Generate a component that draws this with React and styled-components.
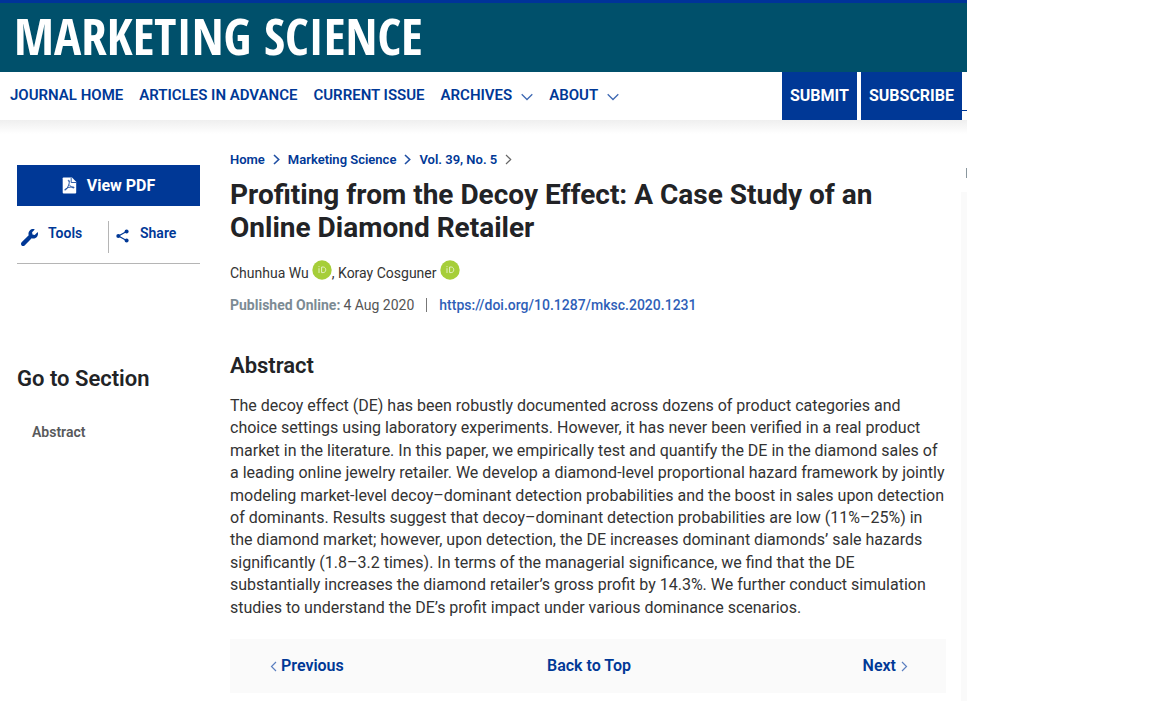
import React from "react";
import styled, { createGlobalStyle } from "styled-components";

const blue = "#003896";

const GlobalStyle = createGlobalStyle`
  *, *::before, *::after { box-sizing: border-box; }
  body {
    margin: 0;
    background: #fff;
    color: #333;
    font-family: Roboto, "Liberation Sans", sans-serif;
    font-size: 16px;
  }
  a { color: ${blue}; text-decoration: none; }
  button { font: inherit; cursor: pointer; }
`;

const Page = styled.div`
  display: flex;
  flex-direction: column;
  min-height: 100vh;
  margin-right: 185px;
`;

const Banner = styled.header`
  display: flex;
  align-items: center;
  height: 72px;
  padding: 0 14px 5px;
  border-top: 3px solid #003399;
  background: #00506b;
`;

const Logo = styled.a`
  color: #fff;
  font-family: "Open Sans Condensed", "Roboto Condensed", sans-serif;
  font-size: 51px;
  font-weight: 500;
  line-height: 60px;
  white-space: nowrap;
`;

const Nav = styled.nav`
  display: flex;
  justify-content: space-between;
  height: 48px;
  padding: 0 5px 0 10px;
  background: #fff;
`;

const NavShade = styled.div`
  height: 14px;
  background: linear-gradient(#efefef, #fff);
`;

const NavLinks = styled.div`
  display: flex;
  gap: 16px;
  height: 46px;
  align-items: center;
`;

const NavLink = styled.a`
  display: flex;
  align-items: center;
  gap: 9px;
  font-size: 15px;
  font-weight: 600;
  white-space: nowrap;
  svg { margin-top: 4px; }
`;

const NavActions = styled.div`
  display: flex;
  gap: 4px;
`;

const ActionLink = styled.a`
  padding: 0 8px;
  background: ${blue};
  color: #fff;
  font-weight: 700;
  line-height: 48px;
`;

const Clipped = styled.span`
  width: 5px;
  height: 1px;
  margin: 38px -5px 0 -4px;
  background: ${blue};
`;

const Body = styled.div`
  display: flex;
  flex: 1;
  padding-left: 17px;
`;

const Sidebar = styled.aside`
  flex: none;
  width: 183px;
  margin: 31px 30px 0 0;
`;

const PdfButton = styled.button`
  display: flex;
  align-items: center;
  justify-content: center;
  gap: 10px;
  width: 100%;
  height: 41px;
  padding: 0;
  border: 0;
  background: ${blue};
  color: #fff;
  font-weight: 700;
`;

const ToolRow = styled.div`
  display: grid;
  grid-template-columns: 91px 1fr;
  height: 58px;
  padding: 15px 0 10px;
  border-bottom: 1px solid #b5b5b5;
`;

const ToolButton = styled.button`
  display: flex;
  gap: ${(p) => p.$gap};
  padding: 4px 0 0 ${(p) => p.$inset};
  border: 0;
  border-left: ${(p) => (p.$divided ? "1px solid #b5b5b5" : "0")};
  background: none;
  color: ${blue};
  font-size: 14px;
  font-weight: 600;
  line-height: 16px;
  svg { margin-top: 4px; }
`;

const SectionHeading = styled.h2`
  margin: 0;
  color: #222326;
  font-size: 22px;
  font-weight: 600;
  line-height: 28px;
`;

const SectionNav = styled.nav`
  margin-top: 101px;
`;

const SectionLink = styled.a`
  display: block;
  margin: 31px 0 0 15px;
  color: #58595b;
  font-size: 14px;
  font-weight: 600;
  line-height: 16px;
`;

const Main = styled.main`
  flex: 1;
  min-width: 0;
  padding-top: 16px;
`;

const Breadcrumb = styled.nav`
  display: flex;
  align-items: center;
  gap: 8px;
  height: 18px;
  color: ${blue};
  font-size: 13px;
  font-weight: 600;
`;

const Title = styled.h1`
  margin: 10px 0 0;
  color: #222326;
  font-size: 28px;
  font-weight: 700;
  line-height: 33px;
`;

const Authors = styled.div`
  display: flex;
  align-items: center;
  height: 24px;
  margin-top: 17px;
  color: #333;
  font-size: 14px;
  svg { margin: -6px 0 0 3px; }
`;

const Published = styled.div`
  display: flex;
  align-items: center;
  height: 20px;
  margin-top: 10px;
  color: #555;
  font-size: 14px;
  strong { margin-right: 3px; color: #7c8b94; font-weight: 700; }
  a { color: #2f5fb8; font-weight: 500; }
`;

const Divider = styled.span`
  width: 1px;
  height: 14px;
  margin: 0 12px;
  background: #777;
`;

const Abstract = styled.section`
  margin-top: 37px;
  p {
    margin: 15px 0 0;
    color: #333;
    font-size: 16px;
    line-height: 1.4;
  }
`;

const Pager = styled.nav`
  display: grid;
  grid-template-columns: 1fr auto 1fr;
  align-items: center;
  height: 54px;
  margin-top: 20px;
  padding: 0 38px 0 40px;
  background: #fafafa;
  a { font-weight: 600; }
  a svg { margin: 0 4px -1px 0; }
  a:last-child { justify-self: end; }
  a:last-child svg { margin: 0 0 -1px 5px; }
`;

const Rail = styled.div`
  display: flex;
  flex: none;
  flex-direction: column;
  align-items: flex-end;
  width: 6px;
  margin-left: 15px;
  padding-top: 34px;
`;

const RailMark = styled.span`
  width: 1px;
  height: 10px;
  background: #8a979e;
`;

const RailTrack = styled.span`
  flex: 1;
  width: 6px;
  margin-top: 14px;
  background: #fafafa;
`;

const Chevron = ({ width, height, points, stroke = 1, color = "currentColor" }) => (
  <svg width={width} height={height} viewBox={`0 0 ${width} ${height}`} fill="none" stroke={color} strokeWidth={stroke} aria-hidden="true">
    <polyline points={points} />
  </svg>
);

const DownChevron = () => <Chevron width={12} height={8} points="0.7,1.2 6,6.5 11.3,1.2" stroke={1.3} color="#3f69b3" />;
const CrumbChevron = ({ color = "#1f4fa3", stroke = 1.6 }) => (
  <Chevron width={7} height={11} points="1,1 5.7,5.5 1,10" color={color} stroke={stroke} />
);

const PdfIcon = () => (
  <svg width="15" height="17" viewBox="0 0 15 17" aria-hidden="true">
    <path d="M1.5 .5H10L14.2 4.8V15.5Q14.2 16.5 13.2 16.5H1.7Q.7 16.5.7 15.5V1.3Q.7.5 1.5.5Z" fill="#fff" />
    <path d="M9.2 .8V5.5H14" fill="none" stroke={blue} strokeWidth=".8" />
    <path d="M6.8 4.7Q5.6 3.1 6.7 3.1Q8 3.1 7 7.1Q5.7 11.2 3.6 13Q2.2 13.7 3.2 12.1Q5.4 10.1 10.4 9.8Q12.7 10 12 11Q10.1 11.6 7.1 7.6" fill="none" stroke={blue} strokeWidth=".8" />
  </svg>
);

const WrenchIcon = () => (
  <svg width="17" height="17" viewBox="0 0 512 512" fill={blue} aria-hidden="true">
    <path d="M507.7 109.1c-2.2-9-13.5-12.1-20.1-5.5l-74.4 74.4-67.9-11.3L334 98.8l74.4-74.4c6.6-6.6 3.4-17.9-5.7-20.2-47.4-11.7-99.6.9-136.6 37.9-39.6 39.6-50.5 97.1-34.1 147.2L18.7 402.8c-25 25-25 65.5 0 90.5s65.5 25 90.5 0l213.2-213.2c50.1 16.7 107.5 5.7 147.4-34.2 37.1-37 49.7-89.3 37.9-136.8z" />
  </svg>
);

const ShareIcon = () => (
  <svg width="13" height="14" viewBox="0 0 13 14" fill={blue} aria-hidden="true">
    <path d="M10.5 2.5L2.5 7L10.5 11.5" fill="none" stroke={blue} strokeWidth="1.2" />
    <circle cx="10.6" cy="2.4" r="2" />
    <circle cx="2.3" cy="7" r="2" />
    <circle cx="10.6" cy="11.6" r="2" />
  </svg>
);

const OrcidIcon = () => (
  <svg width="20" height="20" viewBox="0 0 20 20" role="img" aria-label="ORCID">
    <circle cx="10" cy="10" r="9.7" fill="#a6ce39" />
    <g fill="none" stroke="#e4f1c3" strokeWidth="1">
      <path d="M7 8.2V13M9.6 7H11.2C14.6 7 14.6 12.6 11.2 12.6H9.6Z" />
    </g>
    <circle cx="7" cy="6.6" r=".6" fill="#e4f1c3" />
  </svg>
);

const navItems = [
  { label: "JOURNAL HOME" },
  { label: "ARTICLES IN ADVANCE" },
  { label: "CURRENT ISSUE" },
  { label: "ARCHIVES", menu: true },
  { label: "ABOUT", menu: true },
];

export default function App() {
  return (
    <>
      <GlobalStyle />
      <Page>
        <Banner>
          <Logo href="#">MARKETING SCIENCE</Logo>
        </Banner>
        <Nav aria-label="Journal">
          <NavLinks>
            {navItems.map(({ label, menu }) => (
              <NavLink href="#" key={label}>
                {label}
                {menu && <DownChevron />}
              </NavLink>
            ))}
          </NavLinks>
          <NavActions>
            <ActionLink href="#">SUBMIT</ActionLink>
            <ActionLink href="#">SUBSCRIBE</ActionLink>
            <Clipped />
          </NavActions>
        </Nav>
        <NavShade />
        <Body>
          <Sidebar>
            <PdfButton type="button">
              <PdfIcon />
              View PDF
            </PdfButton>
            <ToolRow>
              <ToolButton type="button" $gap="10px" $inset="4px">
                <WrenchIcon />
                Tools
              </ToolButton>
              <ToolButton type="button" $gap="11px" $inset="7px" $divided>
                <ShareIcon />
                Share
              </ToolButton>
            </ToolRow>
            <SectionNav aria-label="Sections">
              <SectionHeading>Go to Section</SectionHeading>
              <SectionLink href="#abstract">Abstract</SectionLink>
            </SectionNav>
          </Sidebar>
          <Main>
            <Breadcrumb aria-label="Breadcrumb">
              <a href="#">Home</a>
              <CrumbChevron />
              <a href="#">Marketing Science</a>
              <CrumbChevron />
              <a href="#">Vol. 39, No. 5</a>
              <CrumbChevron color="#666" stroke={1.2} />
            </Breadcrumb>
            <Title>Profiting from the Decoy Effect: A Case Study of an Online Diamond Retailer</Title>
            <Authors>
              <span>Chunhua Wu</span>
              <OrcidIcon />
              <span>,&nbsp;Koray Cosguner</span>
              <OrcidIcon />
            </Authors>
            <Published>
              <strong>Published Online:</strong>
              <span>4 Aug 2020</span>
              <Divider />
              <a href="#">https://doi.org/10.1287/mksc.2020.1231</a>
            </Published>
            <Abstract id="abstract">
              <SectionHeading>Abstract</SectionHeading>
              <p>
                The decoy effect (DE) has been robustly documented across dozens of product categories and choice
                settings using laboratory experiments. However, it has never been verified in a real product market in
                the literature. In this paper, we empirically test and quantify the DE in the diamond sales of a leading
                online jewelry retailer. We develop a diamond-level proportional hazard framework by jointly modeling
                market-level decoy–dominant detection probabilities and the boost in sales upon detection of dominants.
                Results suggest that decoy–dominant detection probabilities are low (11%–25%) in the diamond market;
                however, upon detection, the DE increases dominant diamonds’ sale hazards significantly (1.8–3.2 times).
                In terms of the managerial significance, we find that the DE substantially increases the diamond
                retailer’s gross profit by 14.3%. We further conduct simulation studies to understand the DE’s profit
                impact under various dominance scenarios.
              </p>
            </Abstract>
            <Pager aria-label="Articles">
              <a href="#">
                <Chevron width={7} height={11} points="6,1 1.5,5.5 6,10" color="#5b7fc0" stroke={1.2} />
                Previous
              </a>
              <a href="#">Back to Top</a>
              <a href="#">
                Next
                <Chevron width={7} height={11} points="1,1 5.5,5.5 1,10" color="#5b7fc0" stroke={1.2} />
              </a>
            </Pager>
          </Main>
          <Rail>
            <RailMark />
            <RailTrack />
          </Rail>
        </Body>
      </Page>
    </>
  );
}
